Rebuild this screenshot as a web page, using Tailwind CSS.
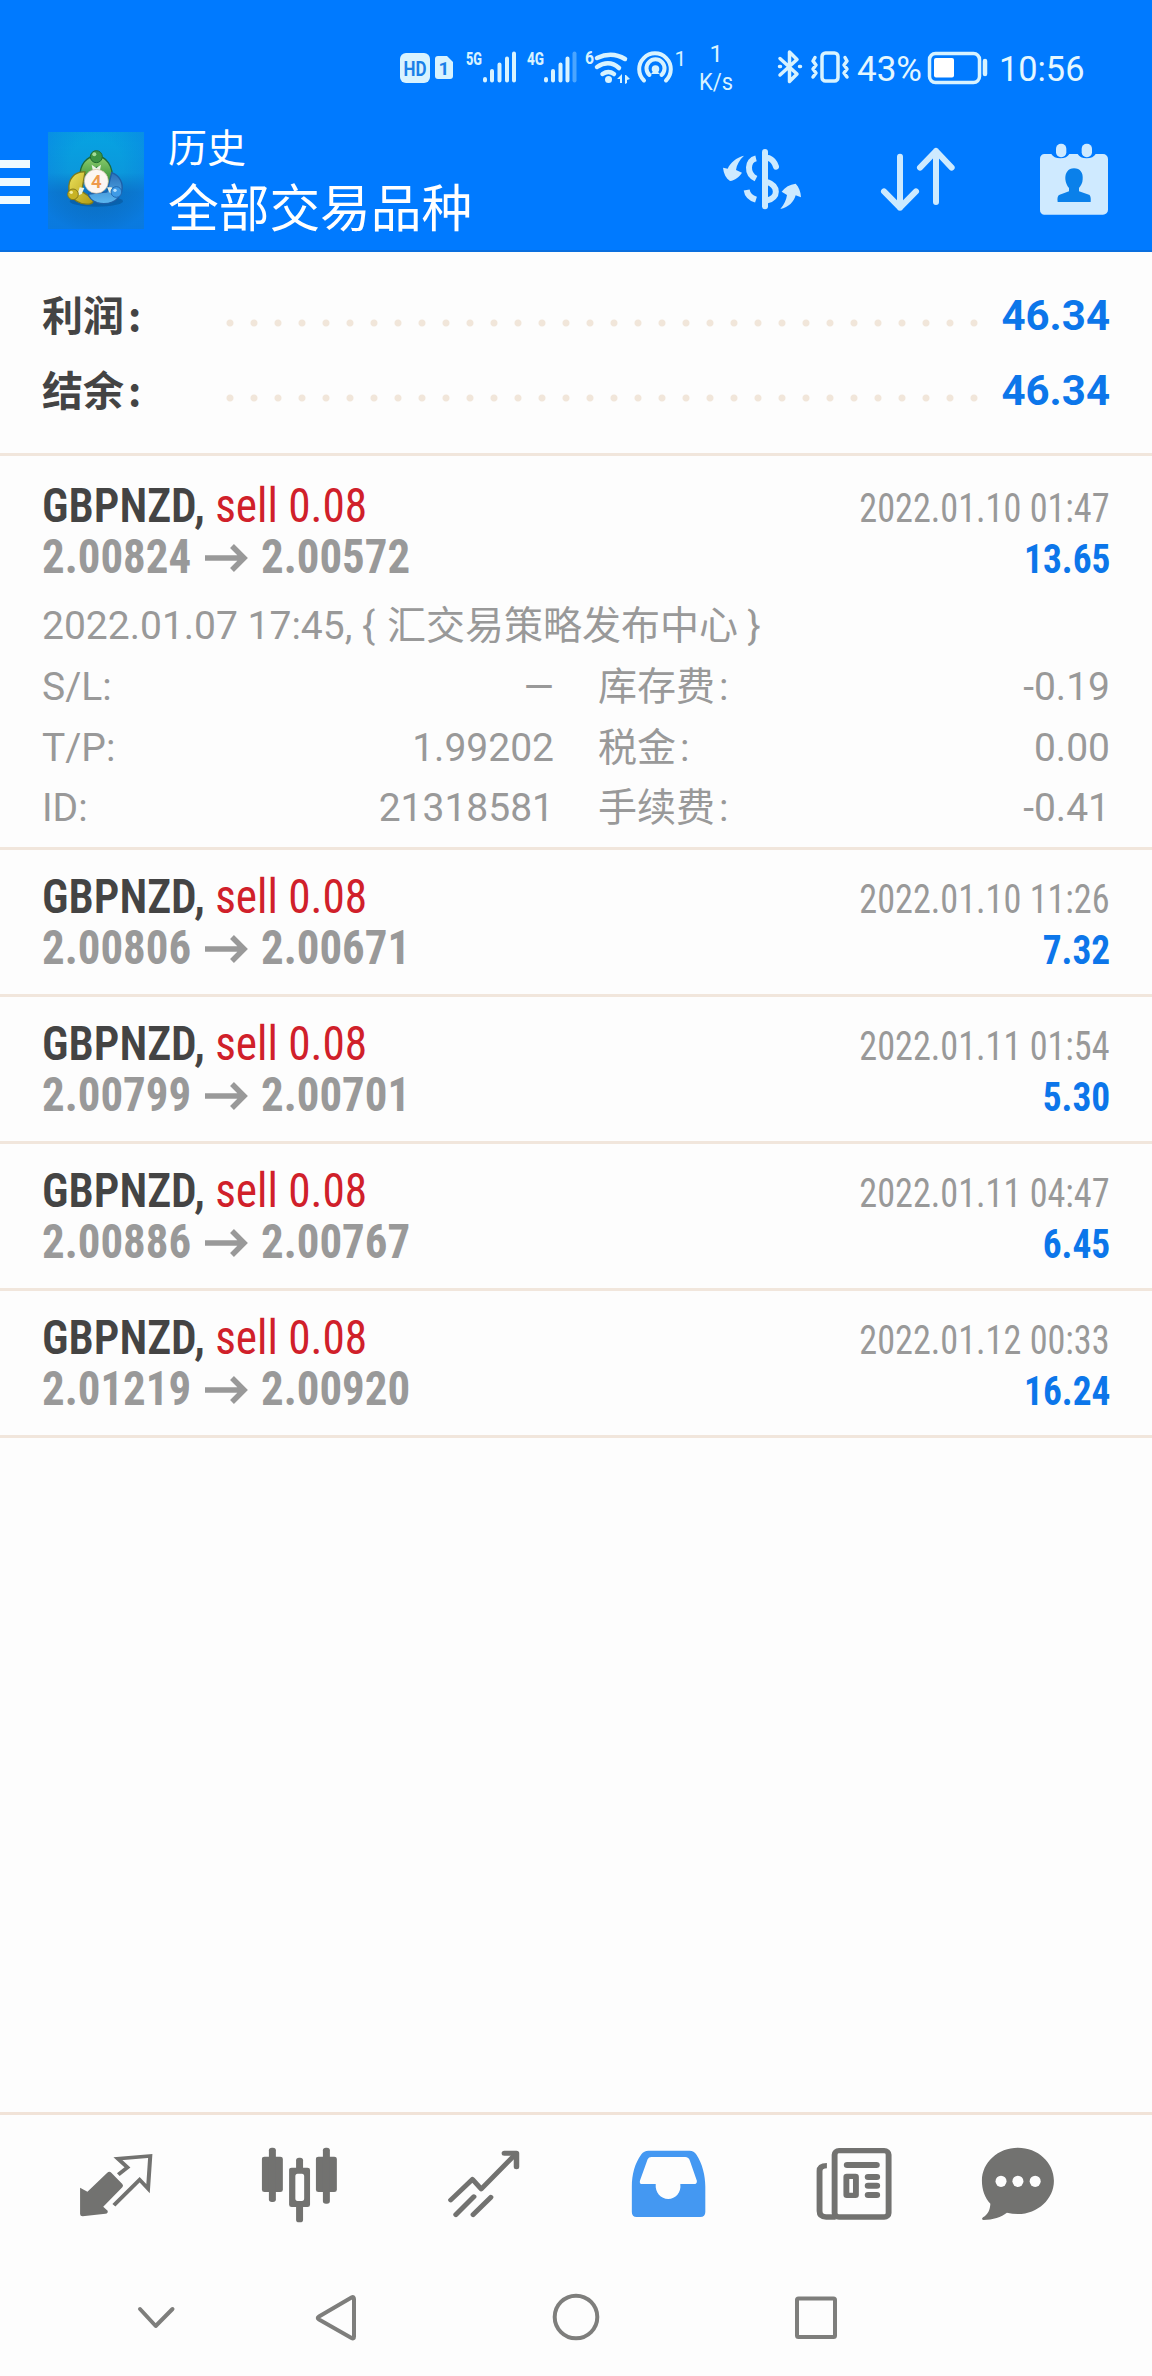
<!DOCTYPE html>
<html lang="zh-CN">
<head>
<meta charset="utf-8">
<title>历史</title>
<script src="https://cdn.jsdelivr.net/npm/@tailwindcss/browser@4"></script>
</head>
<body class="bg-[#fdfdfd]">
<svg class="hidden"><symbol id="arrow" viewBox="0 0 70 51"><path d="M14 27h40M41 15l12 12-12 12" fill="none" stroke="#999" stroke-width="5.500"/></symbol></svg>
<div class="flex flex-col w-[1152px] h-[2376px] overflow-hidden bg-[#fdfdfd] font-['Roboto','Noto_Sans_CJK_SC',sans-serif]">

  <header class="h-[252px] shrink-0 bg-[#007aff] border-b-2 border-[#0a6fdf] text-[#e4f7ff]">
    <!-- status bar -->
    <div class="flex h-[112px] pt-[40px] pl-[398px] items-start">
      <svg class="w-[342px] h-[56px] shrink-0" viewBox="398 40 342 56" fill="#d8f3ff" font-family="Roboto">
        <rect x="400" y="53" width="30" height="30" rx="6"/>
        <text x="403.500" y="75.500" font-size="20" font-weight="700" fill="#1a80e8" textLength="23" lengthAdjust="spacingAndGlyphs">HD</text>
        <path d="M438 56h9l6 6v14a3 3 0 0 1-3 3h-12a3 3 0 0 1-3-3V59a3 3 0 0 1 3-3z"/>
        <text x="438.500" y="75" font-size="19" font-weight="700" fill="#1a80e8">1</text>
        <text x="466" y="65" font-size="19" font-weight="800" textLength="16" lengthAdjust="spacingAndGlyphs">5G</text>
        <path d="M485 80.500v-1.500M492 80.500V71M499.500 80.500V64.500M507 80.500V58.500M514 80.500V53.500" stroke="#d8f3ff" stroke-width="4" stroke-linecap="round"/>
        <text x="527" y="65" font-size="19" font-weight="800" textLength="17" lengthAdjust="spacingAndGlyphs">4G</text>
        <path d="M546 80.500v-1.500M553 80.500V71M560.500 80.500V64.500M567.500 80.500V58.500" stroke="#d8f3ff" stroke-width="4" stroke-linecap="round"/>
        <path d="M574.500 80.500V53.500" stroke="#4ba5ff" stroke-width="4" stroke-linecap="round"/>
        <text x="585" y="64" font-size="19" font-weight="700" textLength="9" lengthAdjust="spacingAndGlyphs">6</text>
        <g fill="none" stroke="#d8f3ff" stroke-width="4.500">
          <path d="M597 58q15-7 28 1" stroke-linecap="round"/>
          <path d="M597 67q12-8 22 1" stroke-linecap="round"/>
          <path d="M602.500 74q6-4 11.500 0" stroke-linecap="round"/>
        </g>
        <circle cx="608.500" cy="79.500" r="3.500"/>
        <path d="M622 74v9h-2v-4h-3zM625 84v-9h1l4 4-3 1v3z"/>
        <g fill="none" stroke="#d8f3ff" stroke-width="4" stroke-linecap="round">
          <path d="M644 80.500a15.800 15.800 0 1 1 22 0"/>
          <path d="M649.500 75a9 9 0 1 1 12 0"/>
        </g>
        <circle cx="655.500" cy="69" r="3.800"/>
        <path d="M655 69l-4 5h9z"/>
        <text x="674.500" y="66" font-size="21">1</text>
        <text x="709.500" y="62" font-size="24">1</text>
        <text x="699" y="90" font-size="24" textLength="34" lengthAdjust="spacingAndGlyphs">K/s</text>
      </svg>
      <svg class="ml-[36px] w-[76px] h-[56px] shrink-0" viewBox="776 40 76 56" fill="none" stroke="#d8f3ff" stroke-width="3.500" stroke-linejoin="round" stroke-linecap="round">
        <path d="M780 58.500l17 15.500-7.500 7.500V52l7.500 7.500-17 15.500M779.500 66.500h1M799.500 66.500h1"/>
        <rect x="822" y="53" width="16" height="28" rx="3.500"/>
        <path d="M815 57.500l-2 3.500 3 4-3 4 3 4-3 4M845 57.500l2 3.500-3 4 3 4-3 4 3 4"/>
      </svg>
      <span class="ml-[5px] w-[70px] text-[35px] leading-[60px]">43%</span>
      <svg class="w-[62px] h-[56px] shrink-0" viewBox="927 40 62 56">
        <rect x="929.500" y="53.500" width="50" height="29" rx="6" fill="none" stroke="#d8f3ff" stroke-width="3.500"/>
        <rect x="934" y="58" width="20" height="19.500" rx="2" fill="#fff"/>
        <path d="M985 61v13" stroke="#d8f3ff" stroke-width="4.500" stroke-linecap="round"/>
      </svg>
      <span class="ml-[10px] text-[35px] leading-[60px] origin-left scale-x-[.98]">10:56</span>
    </div>

    <!-- app bar -->
    <div class="flex h-[138px] items-start text-white">
      <div class="flex flex-col gap-[10px] mt-[48px]">
        <div class="w-[30px] h-[8px] bg-[#effaff]"></div>
        <div class="w-[30px] h-[8px] bg-[#effaff]"></div>
        <div class="w-[30px] h-[8px] bg-[#effaff]"></div>
      </div>
      <svg class="ml-[18px] mt-[20px] w-[96px] h-[97px] shrink-0" viewBox="55 32 288 291">
        <defs>
          <linearGradient id="sky" x1="0" y1="0" x2="0" y2="1"><stop offset="0" stop-color="#06a3e2"/><stop offset=".42" stop-color="#0b98dc"/><stop offset=".62" stop-color="#0b72c4"/><stop offset="1" stop-color="#0a67bd"/></linearGradient>
          <radialGradient id="side" cx=".5" cy=".35" r=".7"><stop offset=".4" stop-color="#0a80dc" stop-opacity="0"/><stop offset="1" stop-color="#0a80ea" stop-opacity=".75"/></radialGradient>
          <linearGradient id="gr" x1="0" y1="0" x2="0" y2="1"><stop offset="0" stop-color="#8fcf6e"/><stop offset="1" stop-color="#2f8a35"/></linearGradient>
          <linearGradient id="ye" x1="0" y1="0" x2="1" y2="1"><stop offset="0" stop-color="#ece25c"/><stop offset="1" stop-color="#b09a12"/></linearGradient>
          <linearGradient id="bl" x1="0" y1="0" x2="0" y2="1"><stop offset="0" stop-color="#2b6fb8"/><stop offset="1" stop-color="#5cb8f2"/></linearGradient>
        </defs>
        <rect x="55" y="32" width="288" height="291" fill="url(#sky)"/>
        <rect x="55" y="32" width="288" height="291" fill="url(#side)"/>
        <ellipse cx="200" cy="240" rx="80" ry="16" fill="#06508f" opacity=".5"/>
        <path d="M152 168c-4-38 20-64 48-64s54 30 46 74c-4 12-18 12-22 4l-22-44-28 20z" fill="url(#gr)" stroke="#1c6a3c" stroke-width="4"/>
        <path d="M166 152c-32-2-52 22-48 54 4 28 34 46 62 42 12-2 14-12 6-18l-30-20z" fill="url(#ye)" stroke="#7d7a1c" stroke-width="4"/>
        <path d="M246 154c24 8 36 32 30 56-8 30-42 44-74 34-10-4-24-14-26-26l56-6z" fill="url(#bl)" stroke="#1d5fa8" stroke-width="4"/>
        <path d="M186 130l14 10 14-10-4 22h-20zM150 198l14 2-8 18-14 6zM246 198l-14 0 8 16 14 8z" fill="#e9f3e4"/>
        <circle cx="200" cy="106" r="18" fill="#3d9443" stroke="#226b2f" stroke-width="3"/>
        <circle cx="194" cy="99" r="6" fill="#a4dc98"/>
        <circle cx="130" cy="219" r="16" fill="#c8b324" stroke="#84791a" stroke-width="3"/>
        <circle cx="125" cy="213" r="5" fill="#f5efa0"/>
        <circle cx="260" cy="212" r="16" fill="#3f9be6" stroke="#1f68b4" stroke-width="3"/>
        <circle cx="256" cy="207" r="5" fill="#b9e1ff"/>
        <circle cx="200" cy="180" r="36" fill="#fcf6f2" stroke="#c9b9a0" stroke-width="2"/>
        <text x="200" y="200" text-anchor="middle" font-family="Roboto" font-size="56" font-weight="600" fill="#ee9a4c">4</text>
      </svg>
      <div class="ml-[24px] mt-[8px] flex flex-col font-['Noto_Sans_CJK_SC',sans-serif]">
        <span class="h-[50px] text-[39px] leading-[50px]">历史</span>
        <span class="h-[70px] text-[50.700px] leading-[70px] whitespace-nowrap">全部交易品种</span>
      </div>
      <div class="ml-auto mr-[42px] mt-[31px] flex items-start">
        <svg class="mt-[3px] w-[84px] h-[65px]" viewBox="90 75 252 195" fill="#cdeaff">
          <path d="M99 140l14 3c8-18 26-34 49-39-14 13-22 28-24 43l18 8c-10 14-20 22-36 25-12-8-19-22-21-40z"/>
          <path d="M333 229l-16-6c-6 20-20 36-46 41 12-14 18-28 20-42l-16-10c10-14 24-22 42-24 10 10 15 24 16 41z"/>
          <g fill="none" stroke="#cdeaff" stroke-width="18">
            <path d="M225 93v163" stroke-linecap="round"/>
            <path d="M198 112c-26 6-30 46 0 61M170 207c2 14 12 24 28 29"/>
            <path d="M236 111c10 4 18 12 22 26" stroke-linecap="round"/>
            <path d="M232 183c34 12 34 48 0 55"/>
          </g>
        </svg>
        <svg class="ml-[75px] mt-[2px] w-[78px] h-[68px]" viewBox="567 75 234 204" fill="none" stroke="#cdeaff" stroke-width="18" stroke-linecap="round" stroke-linejoin="round">
          <path d="M630 110v153M582 214l48 49 48-49M738 246V93M690 143l48-50 47 50"/>
        </svg>
        <svg class="ml-[81px] w-[72px] h-[73px]" viewBox="1044 69 216 219">
          <path d="M1062 102h22a29 20 0 0 0 54 0h25a29 20 0 0 0 54 0h22a15 15 0 0 1 15 15v152a15 15 0 0 1-15 15h-177a15 15 0 0 1-12-15V117a15 15 0 0 1 12-15z" fill="#cfeaff"/>
          <rect x="1098" y="71" width="31" height="41" rx="15" fill="#cfeaff"/>
          <rect x="1175" y="71" width="31" height="41" rx="15" fill="#cfeaff"/>
          <path d="M1152 145c19 0 28 14 26 33 0 12-6 20-11 26v10l30 10c5 2 6 12 5 22h-99c-2-12 0-20 6-22l28-10v-10c-6-6-10-16-11-26-1-19 8-33 26-33z" fill="#0a80ea"/>
        </svg>
      </div>
    </div>
  </header>

  <!-- totals -->
  <section class="h-[204px] shrink-0 border-b-[3px] border-[#f1e6dc] pt-[26px] px-[42px] text-[42px] leading-[75px] font-bold">
    <div class="flex h-[75px]">
      <span class="w-[176px] text-[#444] text-[41px] font-['Noto_Sans_CJK_SC',sans-serif] -translate-y-[2px]">利润<span class="ml-[4px]">:</span></span>
      <div class="mt-[33px] h-[24px] w-[760px] bg-[radial-gradient(circle,#f1e6da_3px,transparent_4px)] bg-[length:24px_24px]"></div>
      <span class="ml-auto text-[#0c76ea]">46.34</span>
    </div>
    <div class="flex h-[75px]">
      <span class="w-[176px] text-[#444] text-[41px] font-['Noto_Sans_CJK_SC',sans-serif] -translate-y-[2px]">结余<span class="ml-[4px]">:</span></span>
      <div class="mt-[33px] h-[24px] w-[760px] bg-[radial-gradient(circle,#f1e6da_3px,transparent_4px)] bg-[length:24px_24px]"></div>
      <span class="ml-auto text-[#0c76ea]">46.34</span>
    </div>
  </section>

  <!-- deals -->
  <main class="flex-1 font-['Roboto_Condensed','Roboto',sans-serif]">
    <article class="h-[394px] border-b-[3px] border-[#f1e6dc] px-[42px] pt-[24px]">
      <div class="flex justify-between h-[102px]">
        <div class="text-[48px] leading-[51px] whitespace-nowrap">
          <div class="h-[51px] w-fit origin-left scale-x-[.943] text-[#d0202a]"><b class="font-semibold text-[#444]">GBPNZD,</b> sell 0.08</div>
          <div class="flex h-[51px] font-bold text-[#999]"><div class="w-[149px]"><div class="w-fit origin-left scale-x-[.935]">2.00824</div></div><svg class="w-[70px] h-[51px]" role="img" aria-label="→"><use href="#arrow"/></svg><div class="w-[149px]"><div class="w-fit origin-left scale-x-[.935]">2.00572</div></div></div>
        </div>
        <div class="flex flex-col items-end pt-[3px] text-[40px] leading-[51px] whitespace-nowrap">
          <div class="origin-right scale-x-[.905] text-[#999]">2022.01.10 01:47</div>
          <div class="origin-right scale-x-[.935] font-bold text-[#0c76ea]">13.65</div>
        </div>
      </div>
      <div class="mt-[14px] text-[39px] leading-[61px] text-[#999] font-['Roboto','Noto_Sans_CJK_SC',sans-serif] whitespace-nowrap">
        <div class="h-[61px]">2022.01.07 17:45, { <span class="ml-[2px]">汇交易策略发布中心 }</span></div>
        <div class="flex h-[61px]"><span>S/L:</span><span class="ml-auto">—</span><span class="ml-[44px] w-[260px]">库存费<span class="ml-[4px]">:</span></span><span class="w-[252px] text-right">-0.19</span></div>
        <div class="flex h-[61px]"><span>T/P:</span><span class="ml-auto">1.99202</span><span class="ml-[44px] w-[260px]">税金<span class="ml-[4px]">:</span></span><span class="w-[252px] text-right">0.00</span></div>
        <div class="flex h-[61px] -mt-px"><span>ID:</span><span class="ml-auto">21318581</span><span class="ml-[44px] w-[260px]">手续费<span class="ml-[4px]">:</span></span><span class="w-[252px] text-right">-0.41</span></div>
      </div>
    </article>

    <article class="flex justify-between h-[147px] border-b-[3px] border-[#f1e6dc] px-[42px] pt-[21px]">
      <div class="text-[48px] leading-[51px] whitespace-nowrap">
        <div class="h-[51px] w-fit origin-left scale-x-[.943] text-[#d0202a]"><b class="font-semibold text-[#444]">GBPNZD,</b> sell 0.08</div>
        <div class="flex h-[51px] font-bold text-[#999]"><div class="w-[149px]"><div class="w-fit origin-left scale-x-[.935]">2.00806</div></div><svg class="w-[70px] h-[51px]" role="img" aria-label="→"><use href="#arrow"/></svg><div class="w-[149px]"><div class="w-fit origin-left scale-x-[.935]">2.00671</div></div></div>
      </div>
      <div class="flex flex-col items-end pt-[3px] text-[40px] leading-[51px] whitespace-nowrap">
        <div class="origin-right scale-x-[.905] text-[#999]">2022.01.10 11:26</div>
        <div class="origin-right scale-x-[.935] font-bold text-[#0c76ea]">7.32</div>
      </div>
    </article>

    <article class="flex justify-between h-[147px] border-b-[3px] border-[#f1e6dc] px-[42px] pt-[21px]">
      <div class="text-[48px] leading-[51px] whitespace-nowrap">
        <div class="h-[51px] w-fit origin-left scale-x-[.943] text-[#d0202a]"><b class="font-semibold text-[#444]">GBPNZD,</b> sell 0.08</div>
        <div class="flex h-[51px] font-bold text-[#999]"><div class="w-[149px]"><div class="w-fit origin-left scale-x-[.935]">2.00799</div></div><svg class="w-[70px] h-[51px]" role="img" aria-label="→"><use href="#arrow"/></svg><div class="w-[149px]"><div class="w-fit origin-left scale-x-[.935]">2.00701</div></div></div>
      </div>
      <div class="flex flex-col items-end pt-[3px] text-[40px] leading-[51px] whitespace-nowrap">
        <div class="origin-right scale-x-[.905] text-[#999]">2022.01.11 01:54</div>
        <div class="origin-right scale-x-[.935] font-bold text-[#0c76ea]">5.30</div>
      </div>
    </article>

    <article class="flex justify-between h-[147px] border-b-[3px] border-[#f1e6dc] px-[42px] pt-[21px]">
      <div class="text-[48px] leading-[51px] whitespace-nowrap">
        <div class="h-[51px] w-fit origin-left scale-x-[.943] text-[#d0202a]"><b class="font-semibold text-[#444]">GBPNZD,</b> sell 0.08</div>
        <div class="flex h-[51px] font-bold text-[#999]"><div class="w-[149px]"><div class="w-fit origin-left scale-x-[.935]">2.00886</div></div><svg class="w-[70px] h-[51px]" role="img" aria-label="→"><use href="#arrow"/></svg><div class="w-[149px]"><div class="w-fit origin-left scale-x-[.935]">2.00767</div></div></div>
      </div>
      <div class="flex flex-col items-end pt-[3px] text-[40px] leading-[51px] whitespace-nowrap">
        <div class="origin-right scale-x-[.905] text-[#999]">2022.01.11 04:47</div>
        <div class="origin-right scale-x-[.935] font-bold text-[#0c76ea]">6.45</div>
      </div>
    </article>

    <article class="flex justify-between h-[147px] border-b-[3px] border-[#f1e6dc] px-[42px] pt-[21px]">
      <div class="text-[48px] leading-[51px] whitespace-nowrap">
        <div class="h-[51px] w-fit origin-left scale-x-[.943] text-[#d0202a]"><b class="font-semibold text-[#444]">GBPNZD,</b> sell 0.08</div>
        <div class="flex h-[51px] font-bold text-[#999]"><div class="w-[149px]"><div class="w-fit origin-left scale-x-[.935]">2.01219</div></div><svg class="w-[70px] h-[51px]" role="img" aria-label="→"><use href="#arrow"/></svg><div class="w-[149px]"><div class="w-fit origin-left scale-x-[.935]">2.00920</div></div></div>
      </div>
      <div class="flex flex-col items-end pt-[3px] text-[40px] leading-[51px] whitespace-nowrap">
        <div class="origin-right scale-x-[.905] text-[#999]">2022.01.12 00:33</div>
        <div class="origin-right scale-x-[.935] font-bold text-[#0c76ea]">16.24</div>
      </div>
    </article>
  </main>

  <!-- tab bar -->
  <nav class="flex shrink-0 h-[148px] border-t-[3px] border-[#f1e3d8] pt-[30px] pl-[72px]">
    <svg class="w-[90px] h-[80px]" viewBox="196 135 245 240" preserveAspectRatio="none">
      <path d="M218 263l20 12 54-57q6-5 11 0l30 34q4 5 0 10l-52 58 12 12q2 8-6 9l-62 8q-7 0-7-7z" fill="#727270"/>
      <path d="M322 224l25-22-26-26 88-8-6 98-23-27-70 77" fill="none" stroke="#727270" stroke-width="11"/>
    </svg>
    <svg class="ml-[90px] w-[90px] h-[80px]" viewBox="686 135 245 240" preserveAspectRatio="none" fill="#727270">
      <rect x="713" y="170" width="57" height="106" rx="7"/><rect x="732" y="143" width="19" height="163" rx="8"/>
      <rect x="860" y="170" width="57" height="106" rx="7"/><rect x="879" y="143" width="19" height="168" rx="8"/>
      <rect x="806" y="173" width="19" height="40" rx="8"/><rect x="806" y="310" width="19" height="57" rx="8"/>
      <path fill-rule="evenodd" d="M794 203h43q7 0 7 7v104q0 7-7 7h-43q-7 0-7-7V210q0-7 7-7zM810 221q-6 0-6 8v66q0 8 6 8h12q6 0 6-8v-66q0-8-6-8z"/>
    </svg>
    <svg class="ml-[90px] w-[90px] h-[80px]" viewBox="1176 135 245 240" preserveAspectRatio="none" fill="none" stroke="#727270" stroke-width="14" stroke-linecap="round" stroke-linejoin="round">
      <path d="M1227 300l59-62 24 29 93-104M1241 344l49-54M1288 344l48-52"/>
      <path d="M1373 160h33v40" stroke-width="15"/>
    </svg>
    <svg class="ml-[108px] w-[90px] h-[80px]" viewBox="147 135 245 240" preserveAspectRatio="none">
      <path fill="#4498f2" fill-rule="evenodd" d="M197 152h112q12 0 19 12c16 27 24 62 24 96v76q0 15-14 15H165q-13 0-13-15v-76c0-36 8-70 26-97q7-11 19-11zM205 171q-7 0-10 7l-21 64q-2 10 6 10h37c-2 26 14 45 34 45s36-19 33-45h37q9 0 8-10l-19-60q-3-11-13-11z"/>
    </svg>
    <svg class="ml-[90px] w-[90px] h-[80px]" viewBox="637 135 245 240" preserveAspectRatio="none" fill="none" stroke="#727270" stroke-width="16">
      <rect x="704" y="152" width="147" height="199" rx="12"/>
      <path d="M683 197q-20 0-20 16v120q0 18 18 18h26"/>
      <path d="M738 195h80M795 231h24M795 257h24M795 285h24" stroke-width="18" stroke-linecap="round"/>
      <rect x="736" y="229" width="26" height="57" rx="1" stroke-width="16"/>
    </svg>
    <svg class="ml-[72px] w-[90px] h-[80px]" viewBox="1078 135 245 240" preserveAspectRatio="none">
      <path fill="#727270" fill-rule="evenodd" d="M1203 143c54 0 98 44 98 99s-44 100-98 100q-15 0-30-4c-15 13-38 21-64 22q-7-1-1-8c14-10 19-22 20-41-15-18-23-42-23-69 0-55 44-99 98-99z"/>
      <g fill="#fdfdfd"><ellipse cx="1157" cy="244" rx="15" ry="17"/><ellipse cx="1203" cy="244" rx="15" ry="17"/><ellipse cx="1250" cy="244" rx="15" ry="17"/></g>
    </svg>
  </nav>

  <!-- system navigation -->
  <div class="flex shrink-0 h-[116px] pt-[30px] pl-[126px]">
    <svg class="w-[60px] h-[55px]" viewBox="126 2290 60 55" fill="none" stroke="#7e7e7c" stroke-width="4" stroke-linecap="round" stroke-linejoin="round"><path d="M140 2309l15.700 17L172.500 2309"/></svg>
    <svg class="ml-[120px] w-[60px] h-[55px]" viewBox="306 2290 60 55" fill="none" stroke="#7e7e7c" stroke-width="4" stroke-linejoin="round"><path d="M351.500 2297.500q2.500-1.500 2.500 1.500v37.500q0 3-2.500 1.500L319 2319.500q-2.500-1.500 0-3z"/></svg>
    <svg class="ml-[180px] w-[60px] h-[55px]" viewBox="546 2290 60 55" fill="none" stroke="#7e7e7c" stroke-width="4"><circle cx="576" cy="2317" r="21.300"/></svg>
    <svg class="ml-[180px] w-[60px] h-[55px]" viewBox="786 2290 60 55" fill="none" stroke="#7e7e7c" stroke-width="4"><rect x="797" y="2298.500" width="38" height="38.500" rx="1.500"/></svg>
  </div>
</div>
</body>
</html>
